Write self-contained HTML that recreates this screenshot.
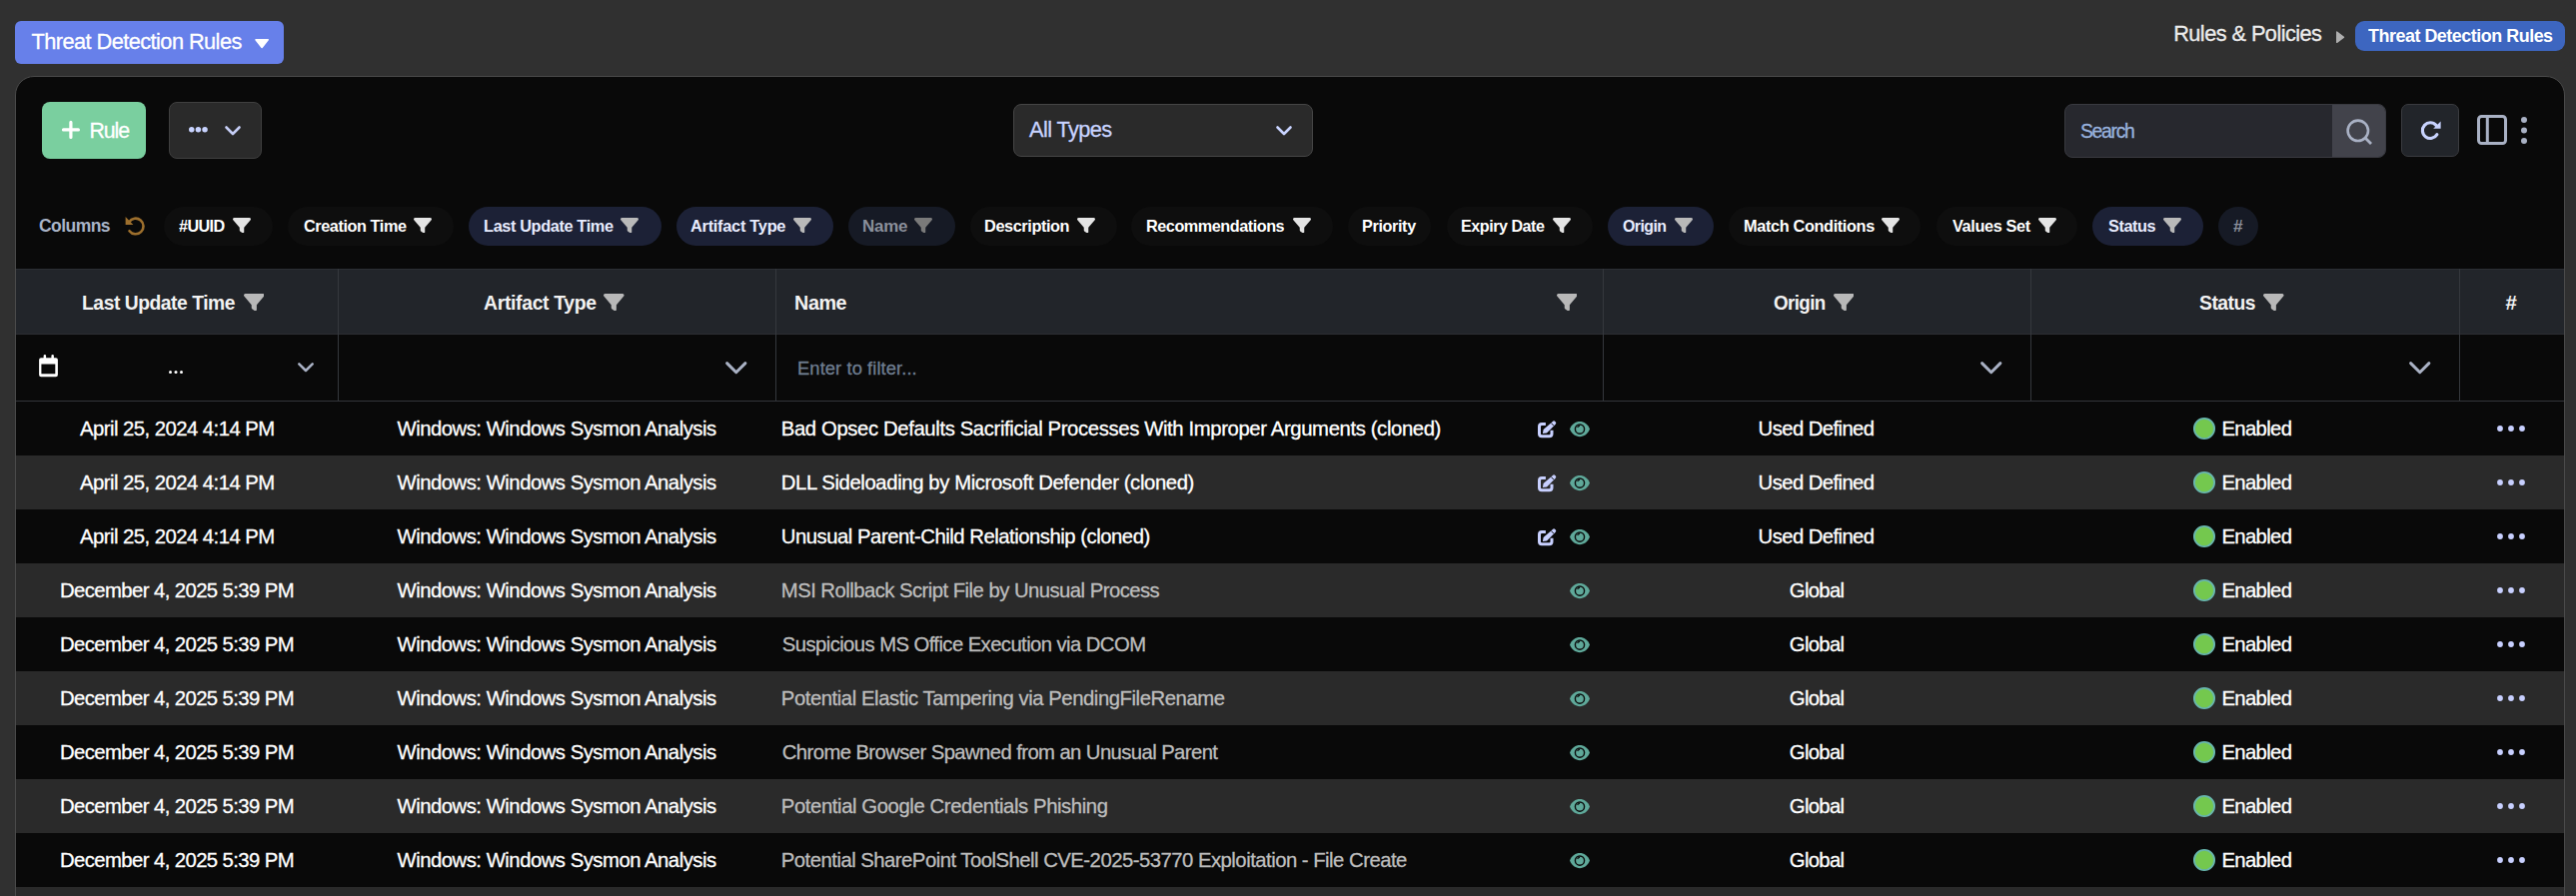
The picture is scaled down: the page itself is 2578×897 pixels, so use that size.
<!DOCTYPE html>
<html><head><meta charset="utf-8"><style>
html,body{margin:0;padding:0;}
body{width:2578px;height:897px;overflow:hidden;background:#303030;position:relative;font-family:'Liberation Sans', sans-serif;}
</style></head><body>
<div style="position:absolute;left:15px;top:21px;width:269px;height:43px;background:#6780ea;border-radius:6px;"></div><svg style="position:absolute;left:254.5px;top:38.8px;overflow:visible" width="14.2" height="9.4" viewBox="0 0 14.2 9.4"><path d="M1 0.8 H13.2 L7.1 8.4 Z" fill="#fff" stroke="#fff" stroke-width="1.6" stroke-linejoin="round"/></svg><svg style="position:absolute;left:2338px;top:31px;overflow:visible" width="8.3" height="12.3" viewBox="0 0 8.3 12.3"><path d="M0.7 0.9 L7.6 6.15 L0.7 11.4 Z" fill="#b0b0b0" stroke="#b0b0b0" stroke-width="1.3" stroke-linejoin="round"/></svg><div style="position:absolute;left:2357px;top:21px;width:210px;height:30px;background:#3d66c0;border-radius:9px;"></div><div style="position:absolute;left:15px;top:76px;width:2552px;height:900px;background:#090909;border:1px solid #4a4a4a;box-sizing:border-box;border-radius:19px 19px 0 0"></div><div style="position:absolute;left:42px;top:102px;width:104px;height:57px;background:#7acf9f;border-radius:8px;"></div><svg style="position:absolute;left:61.8px;top:121.2px;overflow:visible" width="18" height="18" viewBox="0 0 18 18"><path d="M8.9 1.4 V16.4 M1.5 8.9 H16.4" stroke="#fff" stroke-width="3.2" stroke-linecap="round"/></svg><div style="position:absolute;left:169px;top:102px;width:93px;height:57px;background:#2a2a2a;border-radius:8px;border:1px solid #3f3f3f;box-sizing:border-box;"></div><svg style="position:absolute;left:188.8px;top:126.6px;overflow:visible" width="19" height="5.6" viewBox="0 0 19 5.6"><circle cx="2.75" cy="2.8" r="2.75" fill="#c8d3ff"/><circle cx="9.4" cy="2.8" r="2.75" fill="#c8d3ff"/><circle cx="16.05" cy="2.8" r="2.75" fill="#c8d3ff"/></svg><svg style="position:absolute;left:224.5px;top:125.7px;overflow:visible" width="16" height="10" viewBox="0 0 16 10"><path d="M1.5 1.5 L8 8 L14.5 1.5" fill="none" stroke="#c5cdf5" stroke-width="2.6" stroke-linecap="round" stroke-linejoin="round"/></svg><div style="position:absolute;left:1014px;top:104px;width:300px;height:53px;background:#2a2a2a;border-radius:8px;border:1px solid #454545;box-sizing:border-box;"></div><svg style="position:absolute;left:1276.6px;top:126px;overflow:visible" width="16" height="9.5" viewBox="0 0 16 9.5"><path d="M1.5 1.5 L8 8 L14.5 1.5" fill="none" stroke="#c8d3ff" stroke-width="2.6" stroke-linecap="round" stroke-linejoin="round"/></svg><div style="position:absolute;left:2066px;top:104px;width:322px;height:54px;background:#27282e;border-radius:8px;border:1px solid #393a40;box-sizing:border-box;"></div><div style="position:absolute;left:2334px;top:105px;width:53px;height:52px;background:#42434b;border-radius:0 7px 7px 0"></div><svg style="position:absolute;left:2346px;top:117px;overflow:visible" width="30" height="30" viewBox="0 0 30 30"><circle cx="13.8" cy="13.8" r="10.2" fill="none" stroke="#a9b1c4" stroke-width="2.6"/><path d="M21.0 21.0 L27.0 27.0" stroke="#a9b1c4" stroke-width="2.8" stroke-linecap="butt"/></svg><div style="position:absolute;left:2403px;top:104px;width:58px;height:53px;background:#22252a;border-radius:7px;border:1px solid #3a3b3f;box-sizing:border-box;"></div><svg style="position:absolute;left:2422px;top:120px;overflow:visible" width="22" height="22" viewBox="0 0 22 22"><path d="M16.0 5.4 A7.8 7.8 0 1 0 16.9 14.6" fill="none" stroke="#c8d3ff" stroke-width="3.1" stroke-linecap="round"/><path d="M20.6 1.4 V8.7 H13.2 Z" fill="#c8d3ff"/></svg><svg style="position:absolute;left:2479px;top:115px;overflow:visible" width="30" height="30" viewBox="0 0 30 30"><rect x="1.5" y="1.5" width="27" height="27" rx="3" fill="none" stroke="#a9b1c4" stroke-width="3"/><path d="M10.3 1.5 V28.5" stroke="#a9b1c4" stroke-width="3"/></svg><svg style="position:absolute;left:2523px;top:117.4px;overflow:visible" width="6" height="27" viewBox="0 0 6 27"><circle cx="3" cy="3" r="3" fill="#a9b1c4"/><circle cx="3" cy="13.6" r="3" fill="#a9b1c4"/><circle cx="3" cy="24" r="3" fill="#a9b1c4"/></svg><svg style="position:absolute;left:124.9px;top:216.7px;overflow:visible" width="20" height="19" viewBox="0 0 20 19"><path d="M4.2 5.2 A7.8 7.8 0 1 1 4.5 14.2" fill="none" stroke="#9d6f2d" stroke-width="2.6" stroke-linecap="round"/><path d="M0.6 0 V8 H8.4 Z" fill="#9d6f2d"/></svg><div style="position:absolute;left:163.7px;top:207px;width:109.10000000000002px;height:39px;background:#0e0e0e;border-radius:20px;"></div><svg style="position:absolute;left:233px;top:218px" width="18" height="15.3" viewBox="0 32 512 448" preserveAspectRatio="none"><path d="M3.9 54.9C10.5 40.9 24.5 32 40 32H472c15.5 0 29.5 8.9 36.1 22.9s4.6 30.5-5.2 42.5L320 320.9V448c0 12.1-6.8 23.2-17.7 28.6s-23.8 4.3-33.5-3l-64-48c-8.1-6-12.8-15.5-12.8-25.6V320.9L9 97.3C-.7 85.4-2.8 68.8 3.9 54.9z" fill="#e4e4e4"/></svg><div style="position:absolute;left:287.8px;top:207px;width:165.8px;height:39px;background:#0e0e0e;border-radius:20px;"></div><svg style="position:absolute;left:414.4px;top:218px" width="18" height="15.3" viewBox="0 32 512 448" preserveAspectRatio="none"><path d="M3.9 54.9C10.5 40.9 24.5 32 40 32H472c15.5 0 29.5 8.9 36.1 22.9s4.6 30.5-5.2 42.5L320 320.9V448c0 12.1-6.8 23.2-17.7 28.6s-23.8 4.3-33.5-3l-64-48c-8.1-6-12.8-15.5-12.8-25.6V320.9L9 97.3C-.7 85.4-2.8 68.8 3.9 54.9z" fill="#e4e4e4"/></svg><div style="position:absolute;left:469.3px;top:207px;width:192.49999999999994px;height:39px;background:#1c2136;border-radius:20px;"></div><svg style="position:absolute;left:620.5px;top:218px" width="18" height="15.3" viewBox="0 32 512 448" preserveAspectRatio="none"><path d="M3.9 54.9C10.5 40.9 24.5 32 40 32H472c15.5 0 29.5 8.9 36.1 22.9s4.6 30.5-5.2 42.5L320 320.9V448c0 12.1-6.8 23.2-17.7 28.6s-23.8 4.3-33.5-3l-64-48c-8.1-6-12.8-15.5-12.8-25.6V320.9L9 97.3C-.7 85.4-2.8 68.8 3.9 54.9z" fill="#b9b9b9"/></svg><div style="position:absolute;left:677.2px;top:207px;width:156.79999999999995px;height:39px;background:#1c2136;border-radius:20px;"></div><svg style="position:absolute;left:793.7px;top:218px" width="18" height="15.3" viewBox="0 32 512 448" preserveAspectRatio="none"><path d="M3.9 54.9C10.5 40.9 24.5 32 40 32H472c15.5 0 29.5 8.9 36.1 22.9s4.6 30.5-5.2 42.5L320 320.9V448c0 12.1-6.8 23.2-17.7 28.6s-23.8 4.3-33.5-3l-64-48c-8.1-6-12.8-15.5-12.8-25.6V320.9L9 97.3C-.7 85.4-2.8 68.8 3.9 54.9z" fill="#b9b9b9"/></svg><div style="position:absolute;left:848.8px;top:207px;width:107.10000000000002px;height:39px;background:#161a25;border-radius:20px;"></div><svg style="position:absolute;left:915.4px;top:218px" width="18" height="15.3" viewBox="0 32 512 448" preserveAspectRatio="none"><path d="M3.9 54.9C10.5 40.9 24.5 32 40 32H472c15.5 0 29.5 8.9 36.1 22.9s4.6 30.5-5.2 42.5L320 320.9V448c0 12.1-6.8 23.2-17.7 28.6s-23.8 4.3-33.5-3l-64-48c-8.1-6-12.8-15.5-12.8-25.6V320.9L9 97.3C-.7 85.4-2.8 68.8 3.9 54.9z" fill="#7a7a7a"/></svg><div style="position:absolute;left:970.5px;top:207px;width:147.29999999999995px;height:39px;background:#0e0e0e;border-radius:20px;"></div><svg style="position:absolute;left:1077.6px;top:218px" width="18" height="15.3" viewBox="0 32 512 448" preserveAspectRatio="none"><path d="M3.9 54.9C10.5 40.9 24.5 32 40 32H472c15.5 0 29.5 8.9 36.1 22.9s4.6 30.5-5.2 42.5L320 320.9V448c0 12.1-6.8 23.2-17.7 28.6s-23.8 4.3-33.5-3l-64-48c-8.1-6-12.8-15.5-12.8-25.6V320.9L9 97.3C-.7 85.4-2.8 68.8 3.9 54.9z" fill="#e4e4e4"/></svg><div style="position:absolute;left:1132.4px;top:207px;width:201.19999999999982px;height:39px;background:#0e0e0e;border-radius:20px;"></div><svg style="position:absolute;left:1293.8px;top:218px" width="18" height="15.3" viewBox="0 32 512 448" preserveAspectRatio="none"><path d="M3.9 54.9C10.5 40.9 24.5 32 40 32H472c15.5 0 29.5 8.9 36.1 22.9s4.6 30.5-5.2 42.5L320 320.9V448c0 12.1-6.8 23.2-17.7 28.6s-23.8 4.3-33.5-3l-64-48c-8.1-6-12.8-15.5-12.8-25.6V320.9L9 97.3C-.7 85.4-2.8 68.8 3.9 54.9z" fill="#e4e4e4"/></svg><div style="position:absolute;left:1348.9px;top:207px;width:83.29999999999995px;height:39px;background:#0e0e0e;border-radius:20px;"></div><div style="position:absolute;left:1448px;top:207px;width:145.5999999999999px;height:39px;background:#0e0e0e;border-radius:20px;"></div><svg style="position:absolute;left:1553.9px;top:218px" width="18" height="15.3" viewBox="0 32 512 448" preserveAspectRatio="none"><path d="M3.9 54.9C10.5 40.9 24.5 32 40 32H472c15.5 0 29.5 8.9 36.1 22.9s4.6 30.5-5.2 42.5L320 320.9V448c0 12.1-6.8 23.2-17.7 28.6s-23.8 4.3-33.5-3l-64-48c-8.1-6-12.8-15.5-12.8-25.6V320.9L9 97.3C-.7 85.4-2.8 68.8 3.9 54.9z" fill="#e4e4e4"/></svg><div style="position:absolute;left:1609px;top:207px;width:105.79999999999995px;height:39px;background:#1c2136;border-radius:20px;"></div><svg style="position:absolute;left:1675.6px;top:218px" width="18" height="15.3" viewBox="0 32 512 448" preserveAspectRatio="none"><path d="M3.9 54.9C10.5 40.9 24.5 32 40 32H472c15.5 0 29.5 8.9 36.1 22.9s4.6 30.5-5.2 42.5L320 320.9V448c0 12.1-6.8 23.2-17.7 28.6s-23.8 4.3-33.5-3l-64-48c-8.1-6-12.8-15.5-12.8-25.6V320.9L9 97.3C-.7 85.4-2.8 68.8 3.9 54.9z" fill="#b9b9b9"/></svg><div style="position:absolute;left:1729.9px;top:207px;width:192.39999999999986px;height:39px;background:#0e0e0e;border-radius:20px;"></div><svg style="position:absolute;left:1883.3px;top:218px" width="18" height="15.3" viewBox="0 32 512 448" preserveAspectRatio="none"><path d="M3.9 54.9C10.5 40.9 24.5 32 40 32H472c15.5 0 29.5 8.9 36.1 22.9s4.6 30.5-5.2 42.5L320 320.9V448c0 12.1-6.8 23.2-17.7 28.6s-23.8 4.3-33.5-3l-64-48c-8.1-6-12.8-15.5-12.8-25.6V320.9L9 97.3C-.7 85.4-2.8 68.8 3.9 54.9z" fill="#e4e4e4"/></svg><div style="position:absolute;left:1938.4px;top:207px;width:140.5px;height:39px;background:#0e0e0e;border-radius:20px;"></div><svg style="position:absolute;left:2040px;top:218px" width="18" height="15.3" viewBox="0 32 512 448" preserveAspectRatio="none"><path d="M3.9 54.9C10.5 40.9 24.5 32 40 32H472c15.5 0 29.5 8.9 36.1 22.9s4.6 30.5-5.2 42.5L320 320.9V448c0 12.1-6.8 23.2-17.7 28.6s-23.8 4.3-33.5-3l-64-48c-8.1-6-12.8-15.5-12.8-25.6V320.9L9 97.3C-.7 85.4-2.8 68.8 3.9 54.9z" fill="#e4e4e4"/></svg><div style="position:absolute;left:2094.2px;top:207px;width:110.60000000000036px;height:39px;background:#1c2136;border-radius:20px;"></div><svg style="position:absolute;left:2165.2px;top:218px" width="18" height="15.3" viewBox="0 32 512 448" preserveAspectRatio="none"><path d="M3.9 54.9C10.5 40.9 24.5 32 40 32H472c15.5 0 29.5 8.9 36.1 22.9s4.6 30.5-5.2 42.5L320 320.9V448c0 12.1-6.8 23.2-17.7 28.6s-23.8 4.3-33.5-3l-64-48c-8.1-6-12.8-15.5-12.8-25.6V320.9L9 97.3C-.7 85.4-2.8 68.8 3.9 54.9z" fill="#b9b9b9"/></svg><div style="position:absolute;left:2220px;top:207px;width:40px;height:39px;background:#161a25;border-radius:20px;"></div><div style="position:absolute;left:16px;top:269px;width:2550px;height:66px;background:#22252a;border-radius:0;"></div><div style="position:absolute;left:16px;top:269px;width:2550px;height:1px;background:#2c2f34"></div><div style="position:absolute;left:16px;top:334px;width:2550px;height:1px;background:#2c2d32"></div><div style="position:absolute;left:16px;top:401px;width:2550px;height:1px;background:#33353a"></div><div style="position:absolute;left:338px;top:269px;width:1px;height:132px;background:#35383d"></div><div style="position:absolute;left:776px;top:269px;width:1px;height:132px;background:#35383d"></div><div style="position:absolute;left:1604px;top:269px;width:1px;height:132px;background:#35383d"></div><div style="position:absolute;left:2032px;top:269px;width:1px;height:132px;background:#35383d"></div><div style="position:absolute;left:2461px;top:269px;width:1px;height:132px;background:#35383d"></div><svg style="position:absolute;left:243.7px;top:293.8px" width="20.6" height="17.3" viewBox="0 32 512 448" preserveAspectRatio="none"><path d="M3.9 54.9C10.5 40.9 24.5 32 40 32H472c15.5 0 29.5 8.9 36.1 22.9s4.6 30.5-5.2 42.5L320 320.9V448c0 12.1-6.8 23.2-17.7 28.6s-23.8 4.3-33.5-3l-64-48c-8.1-6-12.8-15.5-12.8-25.6V320.9L9 97.3C-.7 85.4-2.8 68.8 3.9 54.9z" fill="#b8b8b8"/></svg><svg style="position:absolute;left:604px;top:293.8px" width="20.6" height="17.3" viewBox="0 32 512 448" preserveAspectRatio="none"><path d="M3.9 54.9C10.5 40.9 24.5 32 40 32H472c15.5 0 29.5 8.9 36.1 22.9s4.6 30.5-5.2 42.5L320 320.9V448c0 12.1-6.8 23.2-17.7 28.6s-23.8 4.3-33.5-3l-64-48c-8.1-6-12.8-15.5-12.8-25.6V320.9L9 97.3C-.7 85.4-2.8 68.8 3.9 54.9z" fill="#b8b8b8"/></svg><svg style="position:absolute;left:1557.7px;top:293.8px" width="20.6" height="17.3" viewBox="0 32 512 448" preserveAspectRatio="none"><path d="M3.9 54.9C10.5 40.9 24.5 32 40 32H472c15.5 0 29.5 8.9 36.1 22.9s4.6 30.5-5.2 42.5L320 320.9V448c0 12.1-6.8 23.2-17.7 28.6s-23.8 4.3-33.5-3l-64-48c-8.1-6-12.8-15.5-12.8-25.6V320.9L9 97.3C-.7 85.4-2.8 68.8 3.9 54.9z" fill="#b8b8b8"/></svg><svg style="position:absolute;left:1834.6px;top:293.8px" width="20.6" height="17.3" viewBox="0 32 512 448" preserveAspectRatio="none"><path d="M3.9 54.9C10.5 40.9 24.5 32 40 32H472c15.5 0 29.5 8.9 36.1 22.9s4.6 30.5-5.2 42.5L320 320.9V448c0 12.1-6.8 23.2-17.7 28.6s-23.8 4.3-33.5-3l-64-48c-8.1-6-12.8-15.5-12.8-25.6V320.9L9 97.3C-.7 85.4-2.8 68.8 3.9 54.9z" fill="#b8b8b8"/></svg><svg style="position:absolute;left:2265.1px;top:293.8px" width="20.6" height="17.3" viewBox="0 32 512 448" preserveAspectRatio="none"><path d="M3.9 54.9C10.5 40.9 24.5 32 40 32H472c15.5 0 29.5 8.9 36.1 22.9s4.6 30.5-5.2 42.5L320 320.9V448c0 12.1-6.8 23.2-17.7 28.6s-23.8 4.3-33.5-3l-64-48c-8.1-6-12.8-15.5-12.8-25.6V320.9L9 97.3C-.7 85.4-2.8 68.8 3.9 54.9z" fill="#b8b8b8"/></svg><svg style="position:absolute;left:38.8px;top:354.7px;overflow:visible" width="19" height="23" viewBox="0 0 19 23"><path fill-rule="evenodd" d="M2.1 3.2 H16.9 Q18.9 3.2 18.9 5.2 V20.3 Q18.9 22.3 16.9 22.3 H2.1 Q0.1 22.3 0.1 20.3 V5.2 Q0.1 3.2 2.1 3.2 Z M2.4 9.4 V19.3 H16.3 V9.4 Z" fill="#fff"/><path d="M5.85 1.3 V4 M13.65 1.3 V4" stroke="#fff" stroke-width="2.5" stroke-linecap="round"/></svg><svg style="position:absolute;left:169.2px;top:371.2px;overflow:visible" width="14" height="3" viewBox="0 0 14 3"><circle cx="1.5" cy="1.5" r="1.5" fill="#fff"/><circle cx="7" cy="1.5" r="1.5" fill="#fff"/><circle cx="12.5" cy="1.5" r="1.5" fill="#fff"/></svg><svg style="position:absolute;left:297.6px;top:362.9px;overflow:visible" width="16" height="9.5" viewBox="0 0 16 9.5"><path d="M1.3 1.3 L8 8 L14.7 1.3" fill="none" stroke="#a9b1c4" stroke-width="2.5" stroke-linecap="round" stroke-linejoin="round"/></svg><svg style="position:absolute;left:726.3px;top:361.7px;overflow:visible" width="21.5" height="12.3" viewBox="0 0 21.5 12.3"><path d="M1.6 1.6 L10.75 10.7 L19.9 1.6" fill="none" stroke="#a9b1c4" stroke-width="3" stroke-linecap="round" stroke-linejoin="round"/></svg><svg style="position:absolute;left:1982.3px;top:361.7px;overflow:visible" width="21.5" height="12.3" viewBox="0 0 21.5 12.3"><path d="M1.6 1.6 L10.75 10.7 L19.9 1.6" fill="none" stroke="#a9b1c4" stroke-width="3" stroke-linecap="round" stroke-linejoin="round"/></svg><svg style="position:absolute;left:2411.3px;top:361.7px;overflow:visible" width="21.5" height="12.3" viewBox="0 0 21.5 12.3"><path d="M1.6 1.6 L10.75 10.7 L19.9 1.6" fill="none" stroke="#a9b1c4" stroke-width="3" stroke-linecap="round" stroke-linejoin="round"/></svg><div style="position:absolute;left:16px;top:402px;width:2550px;height:54px;background:#090909;border-radius:0;"></div><svg style="position:absolute;left:1539px;top:420.8px;overflow:visible" width="19" height="17" viewBox="0 0 19 17"><path d="M7.9 3.55 H4 Q1.5 3.55 1.5 6 V13.3 Q1.5 15.8 4 15.8 H11.5 Q14 15.8 14 13.3 V9.7" fill="none" stroke="#c8d0ff" stroke-width="3" stroke-linecap="butt"/><path d="M14.9 0.9 Q16.1 -0.3 17.3 0.9 L17.7 1.3 Q18.9 2.5 17.7 3.7 L9.0 12.4 L4.9 13.1 L5.6 9.0 Z" fill="#c8d0ff"/><path d="M13.3 2.5 L16.1 5.3" stroke="#090909" stroke-width="1"/></svg><svg style="position:absolute;left:1571px;top:421.9px;overflow:visible" width="20" height="15.2" viewBox="0 0 20 15.2"><path d="M0 7.6 C3.5 -2.5 16.5 -2.5 20 7.6 C16.5 17.7 3.5 17.7 0 7.6 Z" fill="#5fa99a"/><circle cx="10" cy="7.6" r="4.6" fill="none" stroke="#0a0a0a" stroke-width="1.4"/><path d="M7.6 5.8 A3 3 0 0 1 10 4.4" fill="none" stroke="#0a0a0a" stroke-width="1.3"/></svg><svg style="position:absolute;left:2195px;top:417.6px;overflow:visible" width="22" height="22" viewBox="0 0 22 22"><circle cx="11" cy="11" r="10.1" fill="#74c84e" stroke="#68b6ad" stroke-width="1.9"/></svg><svg style="position:absolute;left:2499px;top:426px;overflow:visible" width="28" height="6" viewBox="0 0 28 6"><circle cx="3" cy="3" r="2.9" fill="#c8d0ff"/><circle cx="14" cy="3" r="2.9" fill="#c8d0ff"/><circle cx="25" cy="3" r="2.9" fill="#c8d0ff"/></svg><div style="position:absolute;left:16px;top:456px;width:2550px;height:54px;background:#2a2a2a;border-radius:0;"></div><svg style="position:absolute;left:1539px;top:474.8px;overflow:visible" width="19" height="17" viewBox="0 0 19 17"><path d="M7.9 3.55 H4 Q1.5 3.55 1.5 6 V13.3 Q1.5 15.8 4 15.8 H11.5 Q14 15.8 14 13.3 V9.7" fill="none" stroke="#c8d0ff" stroke-width="3" stroke-linecap="butt"/><path d="M14.9 0.9 Q16.1 -0.3 17.3 0.9 L17.7 1.3 Q18.9 2.5 17.7 3.7 L9.0 12.4 L4.9 13.1 L5.6 9.0 Z" fill="#c8d0ff"/><path d="M13.3 2.5 L16.1 5.3" stroke="#090909" stroke-width="1"/></svg><svg style="position:absolute;left:1571px;top:475.9px;overflow:visible" width="20" height="15.2" viewBox="0 0 20 15.2"><path d="M0 7.6 C3.5 -2.5 16.5 -2.5 20 7.6 C16.5 17.7 3.5 17.7 0 7.6 Z" fill="#5fa99a"/><circle cx="10" cy="7.6" r="4.6" fill="none" stroke="#0a0a0a" stroke-width="1.4"/><path d="M7.6 5.8 A3 3 0 0 1 10 4.4" fill="none" stroke="#0a0a0a" stroke-width="1.3"/></svg><svg style="position:absolute;left:2195px;top:471.6px;overflow:visible" width="22" height="22" viewBox="0 0 22 22"><circle cx="11" cy="11" r="10.1" fill="#74c84e" stroke="#68b6ad" stroke-width="1.9"/></svg><svg style="position:absolute;left:2499px;top:480px;overflow:visible" width="28" height="6" viewBox="0 0 28 6"><circle cx="3" cy="3" r="2.9" fill="#c8d0ff"/><circle cx="14" cy="3" r="2.9" fill="#c8d0ff"/><circle cx="25" cy="3" r="2.9" fill="#c8d0ff"/></svg><div style="position:absolute;left:16px;top:510px;width:2550px;height:54px;background:#090909;border-radius:0;"></div><svg style="position:absolute;left:1539px;top:528.8px;overflow:visible" width="19" height="17" viewBox="0 0 19 17"><path d="M7.9 3.55 H4 Q1.5 3.55 1.5 6 V13.3 Q1.5 15.8 4 15.8 H11.5 Q14 15.8 14 13.3 V9.7" fill="none" stroke="#c8d0ff" stroke-width="3" stroke-linecap="butt"/><path d="M14.9 0.9 Q16.1 -0.3 17.3 0.9 L17.7 1.3 Q18.9 2.5 17.7 3.7 L9.0 12.4 L4.9 13.1 L5.6 9.0 Z" fill="#c8d0ff"/><path d="M13.3 2.5 L16.1 5.3" stroke="#090909" stroke-width="1"/></svg><svg style="position:absolute;left:1571px;top:529.9px;overflow:visible" width="20" height="15.2" viewBox="0 0 20 15.2"><path d="M0 7.6 C3.5 -2.5 16.5 -2.5 20 7.6 C16.5 17.7 3.5 17.7 0 7.6 Z" fill="#5fa99a"/><circle cx="10" cy="7.6" r="4.6" fill="none" stroke="#0a0a0a" stroke-width="1.4"/><path d="M7.6 5.8 A3 3 0 0 1 10 4.4" fill="none" stroke="#0a0a0a" stroke-width="1.3"/></svg><svg style="position:absolute;left:2195px;top:525.6px;overflow:visible" width="22" height="22" viewBox="0 0 22 22"><circle cx="11" cy="11" r="10.1" fill="#74c84e" stroke="#68b6ad" stroke-width="1.9"/></svg><svg style="position:absolute;left:2499px;top:534px;overflow:visible" width="28" height="6" viewBox="0 0 28 6"><circle cx="3" cy="3" r="2.9" fill="#c8d0ff"/><circle cx="14" cy="3" r="2.9" fill="#c8d0ff"/><circle cx="25" cy="3" r="2.9" fill="#c8d0ff"/></svg><div style="position:absolute;left:16px;top:564px;width:2550px;height:54px;background:#2a2a2a;border-radius:0;"></div><svg style="position:absolute;left:1571px;top:583.9px;overflow:visible" width="20" height="15.2" viewBox="0 0 20 15.2"><path d="M0 7.6 C3.5 -2.5 16.5 -2.5 20 7.6 C16.5 17.7 3.5 17.7 0 7.6 Z" fill="#5fa99a"/><circle cx="10" cy="7.6" r="4.6" fill="none" stroke="#0a0a0a" stroke-width="1.4"/><path d="M7.6 5.8 A3 3 0 0 1 10 4.4" fill="none" stroke="#0a0a0a" stroke-width="1.3"/></svg><svg style="position:absolute;left:2195px;top:579.6px;overflow:visible" width="22" height="22" viewBox="0 0 22 22"><circle cx="11" cy="11" r="10.1" fill="#74c84e" stroke="#68b6ad" stroke-width="1.9"/></svg><svg style="position:absolute;left:2499px;top:588px;overflow:visible" width="28" height="6" viewBox="0 0 28 6"><circle cx="3" cy="3" r="2.9" fill="#c8d0ff"/><circle cx="14" cy="3" r="2.9" fill="#c8d0ff"/><circle cx="25" cy="3" r="2.9" fill="#c8d0ff"/></svg><div style="position:absolute;left:16px;top:618px;width:2550px;height:54px;background:#090909;border-radius:0;"></div><svg style="position:absolute;left:1571px;top:637.9px;overflow:visible" width="20" height="15.2" viewBox="0 0 20 15.2"><path d="M0 7.6 C3.5 -2.5 16.5 -2.5 20 7.6 C16.5 17.7 3.5 17.7 0 7.6 Z" fill="#5fa99a"/><circle cx="10" cy="7.6" r="4.6" fill="none" stroke="#0a0a0a" stroke-width="1.4"/><path d="M7.6 5.8 A3 3 0 0 1 10 4.4" fill="none" stroke="#0a0a0a" stroke-width="1.3"/></svg><svg style="position:absolute;left:2195px;top:633.6px;overflow:visible" width="22" height="22" viewBox="0 0 22 22"><circle cx="11" cy="11" r="10.1" fill="#74c84e" stroke="#68b6ad" stroke-width="1.9"/></svg><svg style="position:absolute;left:2499px;top:642px;overflow:visible" width="28" height="6" viewBox="0 0 28 6"><circle cx="3" cy="3" r="2.9" fill="#c8d0ff"/><circle cx="14" cy="3" r="2.9" fill="#c8d0ff"/><circle cx="25" cy="3" r="2.9" fill="#c8d0ff"/></svg><div style="position:absolute;left:16px;top:672px;width:2550px;height:54px;background:#2a2a2a;border-radius:0;"></div><svg style="position:absolute;left:1571px;top:691.9px;overflow:visible" width="20" height="15.2" viewBox="0 0 20 15.2"><path d="M0 7.6 C3.5 -2.5 16.5 -2.5 20 7.6 C16.5 17.7 3.5 17.7 0 7.6 Z" fill="#5fa99a"/><circle cx="10" cy="7.6" r="4.6" fill="none" stroke="#0a0a0a" stroke-width="1.4"/><path d="M7.6 5.8 A3 3 0 0 1 10 4.4" fill="none" stroke="#0a0a0a" stroke-width="1.3"/></svg><svg style="position:absolute;left:2195px;top:687.6px;overflow:visible" width="22" height="22" viewBox="0 0 22 22"><circle cx="11" cy="11" r="10.1" fill="#74c84e" stroke="#68b6ad" stroke-width="1.9"/></svg><svg style="position:absolute;left:2499px;top:696px;overflow:visible" width="28" height="6" viewBox="0 0 28 6"><circle cx="3" cy="3" r="2.9" fill="#c8d0ff"/><circle cx="14" cy="3" r="2.9" fill="#c8d0ff"/><circle cx="25" cy="3" r="2.9" fill="#c8d0ff"/></svg><div style="position:absolute;left:16px;top:726px;width:2550px;height:54px;background:#090909;border-radius:0;"></div><svg style="position:absolute;left:1571px;top:745.9px;overflow:visible" width="20" height="15.2" viewBox="0 0 20 15.2"><path d="M0 7.6 C3.5 -2.5 16.5 -2.5 20 7.6 C16.5 17.7 3.5 17.7 0 7.6 Z" fill="#5fa99a"/><circle cx="10" cy="7.6" r="4.6" fill="none" stroke="#0a0a0a" stroke-width="1.4"/><path d="M7.6 5.8 A3 3 0 0 1 10 4.4" fill="none" stroke="#0a0a0a" stroke-width="1.3"/></svg><svg style="position:absolute;left:2195px;top:741.6px;overflow:visible" width="22" height="22" viewBox="0 0 22 22"><circle cx="11" cy="11" r="10.1" fill="#74c84e" stroke="#68b6ad" stroke-width="1.9"/></svg><svg style="position:absolute;left:2499px;top:750px;overflow:visible" width="28" height="6" viewBox="0 0 28 6"><circle cx="3" cy="3" r="2.9" fill="#c8d0ff"/><circle cx="14" cy="3" r="2.9" fill="#c8d0ff"/><circle cx="25" cy="3" r="2.9" fill="#c8d0ff"/></svg><div style="position:absolute;left:16px;top:780px;width:2550px;height:54px;background:#2a2a2a;border-radius:0;"></div><svg style="position:absolute;left:1571px;top:799.9px;overflow:visible" width="20" height="15.2" viewBox="0 0 20 15.2"><path d="M0 7.6 C3.5 -2.5 16.5 -2.5 20 7.6 C16.5 17.7 3.5 17.7 0 7.6 Z" fill="#5fa99a"/><circle cx="10" cy="7.6" r="4.6" fill="none" stroke="#0a0a0a" stroke-width="1.4"/><path d="M7.6 5.8 A3 3 0 0 1 10 4.4" fill="none" stroke="#0a0a0a" stroke-width="1.3"/></svg><svg style="position:absolute;left:2195px;top:795.6px;overflow:visible" width="22" height="22" viewBox="0 0 22 22"><circle cx="11" cy="11" r="10.1" fill="#74c84e" stroke="#68b6ad" stroke-width="1.9"/></svg><svg style="position:absolute;left:2499px;top:804px;overflow:visible" width="28" height="6" viewBox="0 0 28 6"><circle cx="3" cy="3" r="2.9" fill="#c8d0ff"/><circle cx="14" cy="3" r="2.9" fill="#c8d0ff"/><circle cx="25" cy="3" r="2.9" fill="#c8d0ff"/></svg><div style="position:absolute;left:16px;top:834px;width:2550px;height:54px;background:#090909;border-radius:0;"></div><svg style="position:absolute;left:1571px;top:853.9px;overflow:visible" width="20" height="15.2" viewBox="0 0 20 15.2"><path d="M0 7.6 C3.5 -2.5 16.5 -2.5 20 7.6 C16.5 17.7 3.5 17.7 0 7.6 Z" fill="#5fa99a"/><circle cx="10" cy="7.6" r="4.6" fill="none" stroke="#0a0a0a" stroke-width="1.4"/><path d="M7.6 5.8 A3 3 0 0 1 10 4.4" fill="none" stroke="#0a0a0a" stroke-width="1.3"/></svg><svg style="position:absolute;left:2195px;top:849.6px;overflow:visible" width="22" height="22" viewBox="0 0 22 22"><circle cx="11" cy="11" r="10.1" fill="#74c84e" stroke="#68b6ad" stroke-width="1.9"/></svg><svg style="position:absolute;left:2499px;top:858px;overflow:visible" width="28" height="6" viewBox="0 0 28 6"><circle cx="3" cy="3" r="2.9" fill="#c8d0ff"/><circle cx="14" cy="3" r="2.9" fill="#c8d0ff"/><circle cx="25" cy="3" r="2.9" fill="#c8d0ff"/></svg><div style="position:absolute;left:16px;top:888px;width:2550px;height:9px;background:#2a2a2a;border-radius:0;"></div>
<div style="position:absolute;left:31.60px;top:31.13px;font-size:21.74px;line-height:1;letter-spacing:-0.552px;font-weight:400;color:#ffffff;-webkit-text-stroke:0.3px #ffffff;white-space:nowrap">Threat Detection Rules</div><div style="position:absolute;left:2175.20px;top:22.83px;font-size:21.74px;line-height:1;letter-spacing:-0.553px;font-weight:400;color:#ececec;-webkit-text-stroke:0.3px #ececec;white-space:nowrap">Rules &amp; Policies</div><div style="position:absolute;left:2370.00px;top:26.00px;font-size:19.28px;line-height:1;letter-spacing:-0.506px;font-weight:700;color:#ffffff;transform:scaleX(0.9291);transform-origin:0px 0;white-space:nowrap">Threat Detection Rules</div><div style="position:absolute;left:89.40px;top:121.01px;font-size:21.30px;line-height:1;letter-spacing:-1.067px;font-weight:400;color:#ffffff;-webkit-text-stroke:0.3px #ffffff;white-space:nowrap">Rule</div><div style="position:absolute;left:1030.00px;top:119.23px;font-size:21.74px;line-height:1;letter-spacing:-0.588px;font-weight:400;color:#c8d3ff;-webkit-text-stroke:0.3px #c8d3ff;white-space:nowrap">All Types</div><div style="position:absolute;left:2082.00px;top:122.01px;font-size:19.42px;line-height:1;letter-spacing:-1.340px;font-weight:400;color:#98b2de;-webkit-text-stroke:0.3px #98b2de;white-space:nowrap">Search</div><div style="position:absolute;left:38.60px;top:216.90px;font-size:18.70px;line-height:1;letter-spacing:-0.598px;font-weight:700;color:#a9b4c7;transform:scaleX(0.9370);transform-origin:0px 0;white-space:nowrap">Columns</div><div style="position:absolute;left:179.30px;top:217.80px;font-size:17.39px;line-height:1;letter-spacing:-0.633px;font-weight:700;color:#ffffff;transform:scaleX(0.9319);transform-origin:0px 0;white-space:nowrap">#UUID</div><div style="position:absolute;left:303.50px;top:217.80px;font-size:17.39px;line-height:1;letter-spacing:-0.449px;font-weight:700;color:#ffffff;transform:scaleX(0.9348);transform-origin:0px 0;white-space:nowrap">Creation Time</div><div style="position:absolute;left:483.50px;top:217.80px;font-size:17.39px;line-height:1;letter-spacing:-0.412px;font-weight:700;color:#e8ecff;transform:scaleX(0.9392);transform-origin:1px 0;white-space:nowrap">Last Update Time</div><div style="position:absolute;left:691.20px;top:217.80px;font-size:17.39px;line-height:1;letter-spacing:-0.331px;font-weight:700;color:#e8ecff;transform:scaleX(0.9463);transform-origin:0px 0;white-space:nowrap">Artifact Type</div><div style="position:absolute;left:863.20px;top:217.80px;font-size:17.39px;line-height:1;letter-spacing:-0.260px;font-weight:700;color:#8a8f9b;transform:scaleX(0.9752);transform-origin:1px 0;white-space:nowrap">Name</div><div style="position:absolute;left:984.90px;top:217.80px;font-size:17.39px;line-height:1;letter-spacing:-0.427px;font-weight:700;color:#ffffff;transform:scaleX(0.9362);transform-origin:1px 0;white-space:nowrap">Description</div><div style="position:absolute;left:1146.80px;top:217.80px;font-size:17.39px;line-height:1;letter-spacing:-0.514px;font-weight:700;color:#ffffff;transform:scaleX(0.9345);transform-origin:1px 0;white-space:nowrap">Recommendations</div><div style="position:absolute;left:1363.30px;top:217.80px;font-size:17.39px;line-height:1;letter-spacing:-0.410px;font-weight:700;color:#ffffff;transform:scaleX(0.9330);transform-origin:1px 0;white-space:nowrap">Priority</div><div style="position:absolute;left:1462.00px;top:217.80px;font-size:17.39px;line-height:1;letter-spacing:-0.510px;font-weight:700;color:#ffffff;transform:scaleX(0.9255);transform-origin:1px 0;white-space:nowrap">Expiry Date</div><div style="position:absolute;left:1623.60px;top:217.80px;font-size:17.39px;line-height:1;letter-spacing:-0.629px;font-weight:700;color:#e8ecff;transform:scaleX(0.9153);transform-origin:0px 0;white-space:nowrap">Origin</div><div style="position:absolute;left:1744.50px;top:217.80px;font-size:17.39px;line-height:1;letter-spacing:-0.411px;font-weight:700;color:#ffffff;transform:scaleX(0.9400);transform-origin:1px 0;white-space:nowrap">Match Conditions</div><div style="position:absolute;left:1953.70px;top:217.80px;font-size:17.39px;line-height:1;letter-spacing:-0.416px;font-weight:700;color:#ffffff;transform:scaleX(0.9393);transform-origin:0px 0;white-space:nowrap">Values Set</div><div style="position:absolute;left:2109.50px;top:217.80px;font-size:17.39px;line-height:1;letter-spacing:-0.469px;font-weight:700;color:#e8ecff;transform:scaleX(0.9377);transform-origin:0px 0;white-space:nowrap">Status</div><div style="position:absolute;left:2235.00px;top:217.80px;font-size:17.39px;line-height:1;letter-spacing:1.500px;font-weight:700;color:#8a8f9b;white-space:nowrap">#</div><div style="position:absolute;left:82.30px;top:292.80px;font-size:20.43px;line-height:1;letter-spacing:-0.464px;font-weight:700;color:#f2f2f2;transform:scaleX(0.9418);transform-origin:1px 0;white-space:nowrap">Last Update Time</div><div style="position:absolute;left:483.50px;top:292.80px;font-size:20.43px;line-height:1;letter-spacing:-0.358px;font-weight:700;color:#f2f2f2;transform:scaleX(0.9502);transform-origin:0px 0;white-space:nowrap">Artifact Type</div><div style="position:absolute;left:795.00px;top:292.80px;font-size:20.43px;line-height:1;letter-spacing:-0.414px;font-weight:700;color:#f2f2f2;transform:scaleX(0.9667);transform-origin:1px 0;white-space:nowrap">Name</div><div style="position:absolute;left:1774.60px;top:292.80px;font-size:20.43px;line-height:1;letter-spacing:-0.686px;font-weight:700;color:#f2f2f2;transform:scaleX(0.9210);transform-origin:0px 0;white-space:nowrap">Origin</div><div style="position:absolute;left:2200.60px;top:292.80px;font-size:20.43px;line-height:1;letter-spacing:-0.492px;font-weight:700;color:#f2f2f2;transform:scaleX(0.9439);transform-origin:0px 0;white-space:nowrap">Status</div><div style="position:absolute;left:2507.40px;top:292.80px;font-size:20.43px;line-height:1;letter-spacing:1.000px;font-weight:700;color:#f2f2f2;white-space:nowrap">#</div><div style="position:absolute;left:798.00px;top:359.71px;font-size:18.41px;line-height:1;letter-spacing:0.059px;font-weight:400;color:#6e7d90;-webkit-text-stroke:0.3px #6e7d90;white-space:nowrap">Enter to filter...</div><div style="position:absolute;left:80.10px;top:419.01px;font-size:20.29px;line-height:1;letter-spacing:-0.538px;font-weight:400;color:#ffffff;-webkit-text-stroke:0.3px #ffffff;white-space:nowrap">April 25, 2024 4:14 PM</div><div style="position:absolute;left:397.50px;top:419.01px;font-size:20.29px;line-height:1;letter-spacing:-0.487px;font-weight:400;color:#ffffff;-webkit-text-stroke:0.3px #ffffff;white-space:nowrap">Windows: Windows Sysmon Analysis</div><div style="position:absolute;left:781.80px;top:419.01px;font-size:20.29px;line-height:1;letter-spacing:-0.375px;font-weight:400;color:#ffffff;-webkit-text-stroke:0.3px #ffffff;white-space:nowrap">Bad Opsec Defaults Sacrificial Processes With Improper Arguments (cloned)</div><div style="position:absolute;left:1759.60px;top:419.01px;font-size:20.29px;line-height:1;letter-spacing:-0.582px;font-weight:400;color:#ffffff;-webkit-text-stroke:0.3px #ffffff;white-space:nowrap">Used Defined</div><div style="position:absolute;left:2223.40px;top:419.01px;font-size:20.29px;line-height:1;letter-spacing:-0.650px;font-weight:400;color:#ffffff;-webkit-text-stroke:0.3px #ffffff;white-space:nowrap">Enabled</div><div style="position:absolute;left:80.10px;top:473.01px;font-size:20.29px;line-height:1;letter-spacing:-0.538px;font-weight:400;color:#ffffff;-webkit-text-stroke:0.3px #ffffff;white-space:nowrap">April 25, 2024 4:14 PM</div><div style="position:absolute;left:397.50px;top:473.01px;font-size:20.29px;line-height:1;letter-spacing:-0.487px;font-weight:400;color:#ffffff;-webkit-text-stroke:0.3px #ffffff;white-space:nowrap">Windows: Windows Sysmon Analysis</div><div style="position:absolute;left:781.80px;top:473.01px;font-size:20.29px;line-height:1;letter-spacing:-0.389px;font-weight:400;color:#ffffff;-webkit-text-stroke:0.3px #ffffff;white-space:nowrap">DLL Sideloading by Microsoft Defender (cloned)</div><div style="position:absolute;left:1759.60px;top:473.01px;font-size:20.29px;line-height:1;letter-spacing:-0.582px;font-weight:400;color:#ffffff;-webkit-text-stroke:0.3px #ffffff;white-space:nowrap">Used Defined</div><div style="position:absolute;left:2223.40px;top:473.01px;font-size:20.29px;line-height:1;letter-spacing:-0.650px;font-weight:400;color:#ffffff;-webkit-text-stroke:0.3px #ffffff;white-space:nowrap">Enabled</div><div style="position:absolute;left:80.10px;top:527.01px;font-size:20.29px;line-height:1;letter-spacing:-0.538px;font-weight:400;color:#ffffff;-webkit-text-stroke:0.3px #ffffff;white-space:nowrap">April 25, 2024 4:14 PM</div><div style="position:absolute;left:397.50px;top:527.01px;font-size:20.29px;line-height:1;letter-spacing:-0.487px;font-weight:400;color:#ffffff;-webkit-text-stroke:0.3px #ffffff;white-space:nowrap">Windows: Windows Sysmon Analysis</div><div style="position:absolute;left:781.80px;top:527.01px;font-size:20.29px;line-height:1;letter-spacing:-0.476px;font-weight:400;color:#ffffff;-webkit-text-stroke:0.3px #ffffff;white-space:nowrap">Unusual Parent-Child Relationship (cloned)</div><div style="position:absolute;left:1759.60px;top:527.01px;font-size:20.29px;line-height:1;letter-spacing:-0.582px;font-weight:400;color:#ffffff;-webkit-text-stroke:0.3px #ffffff;white-space:nowrap">Used Defined</div><div style="position:absolute;left:2223.40px;top:527.01px;font-size:20.29px;line-height:1;letter-spacing:-0.650px;font-weight:400;color:#ffffff;-webkit-text-stroke:0.3px #ffffff;white-space:nowrap">Enabled</div><div style="position:absolute;left:60.00px;top:581.01px;font-size:20.29px;line-height:1;letter-spacing:-0.583px;font-weight:400;color:#ffffff;-webkit-text-stroke:0.3px #ffffff;white-space:nowrap">December 4, 2025 5:39 PM</div><div style="position:absolute;left:397.50px;top:581.01px;font-size:20.29px;line-height:1;letter-spacing:-0.487px;font-weight:400;color:#ffffff;-webkit-text-stroke:0.3px #ffffff;white-space:nowrap">Windows: Windows Sysmon Analysis</div><div style="position:absolute;left:781.80px;top:581.01px;font-size:20.29px;line-height:1;letter-spacing:-0.531px;font-weight:400;color:#bdbdbd;-webkit-text-stroke:0.3px #bdbdbd;white-space:nowrap">MSI Rollback Script File by Unusual Process</div><div style="position:absolute;left:1790.80px;top:581.01px;font-size:20.29px;line-height:1;letter-spacing:-0.680px;font-weight:400;color:#ffffff;-webkit-text-stroke:0.3px #ffffff;white-space:nowrap">Global</div><div style="position:absolute;left:2223.40px;top:581.01px;font-size:20.29px;line-height:1;letter-spacing:-0.650px;font-weight:400;color:#ffffff;-webkit-text-stroke:0.3px #ffffff;white-space:nowrap">Enabled</div><div style="position:absolute;left:60.00px;top:635.01px;font-size:20.29px;line-height:1;letter-spacing:-0.583px;font-weight:400;color:#ffffff;-webkit-text-stroke:0.3px #ffffff;white-space:nowrap">December 4, 2025 5:39 PM</div><div style="position:absolute;left:397.50px;top:635.01px;font-size:20.29px;line-height:1;letter-spacing:-0.487px;font-weight:400;color:#ffffff;-webkit-text-stroke:0.3px #ffffff;white-space:nowrap">Windows: Windows Sysmon Analysis</div><div style="position:absolute;left:782.80px;top:635.01px;font-size:20.29px;line-height:1;letter-spacing:-0.579px;font-weight:400;color:#bdbdbd;-webkit-text-stroke:0.3px #bdbdbd;white-space:nowrap">Suspicious MS Office Execution via DCOM</div><div style="position:absolute;left:1790.80px;top:635.01px;font-size:20.29px;line-height:1;letter-spacing:-0.680px;font-weight:400;color:#ffffff;-webkit-text-stroke:0.3px #ffffff;white-space:nowrap">Global</div><div style="position:absolute;left:2223.40px;top:635.01px;font-size:20.29px;line-height:1;letter-spacing:-0.650px;font-weight:400;color:#ffffff;-webkit-text-stroke:0.3px #ffffff;white-space:nowrap">Enabled</div><div style="position:absolute;left:60.00px;top:689.01px;font-size:20.29px;line-height:1;letter-spacing:-0.583px;font-weight:400;color:#ffffff;-webkit-text-stroke:0.3px #ffffff;white-space:nowrap">December 4, 2025 5:39 PM</div><div style="position:absolute;left:397.50px;top:689.01px;font-size:20.29px;line-height:1;letter-spacing:-0.487px;font-weight:400;color:#ffffff;-webkit-text-stroke:0.3px #ffffff;white-space:nowrap">Windows: Windows Sysmon Analysis</div><div style="position:absolute;left:781.80px;top:689.01px;font-size:20.29px;line-height:1;letter-spacing:-0.438px;font-weight:400;color:#bdbdbd;-webkit-text-stroke:0.3px #bdbdbd;white-space:nowrap">Potential Elastic Tampering via PendingFileRename</div><div style="position:absolute;left:1790.80px;top:689.01px;font-size:20.29px;line-height:1;letter-spacing:-0.680px;font-weight:400;color:#ffffff;-webkit-text-stroke:0.3px #ffffff;white-space:nowrap">Global</div><div style="position:absolute;left:2223.40px;top:689.01px;font-size:20.29px;line-height:1;letter-spacing:-0.650px;font-weight:400;color:#ffffff;-webkit-text-stroke:0.3px #ffffff;white-space:nowrap">Enabled</div><div style="position:absolute;left:60.00px;top:743.01px;font-size:20.29px;line-height:1;letter-spacing:-0.583px;font-weight:400;color:#ffffff;-webkit-text-stroke:0.3px #ffffff;white-space:nowrap">December 4, 2025 5:39 PM</div><div style="position:absolute;left:397.50px;top:743.01px;font-size:20.29px;line-height:1;letter-spacing:-0.487px;font-weight:400;color:#ffffff;-webkit-text-stroke:0.3px #ffffff;white-space:nowrap">Windows: Windows Sysmon Analysis</div><div style="position:absolute;left:782.80px;top:743.01px;font-size:20.29px;line-height:1;letter-spacing:-0.591px;font-weight:400;color:#bdbdbd;-webkit-text-stroke:0.3px #bdbdbd;white-space:nowrap">Chrome Browser Spawned from an Unusual Parent</div><div style="position:absolute;left:1790.80px;top:743.01px;font-size:20.29px;line-height:1;letter-spacing:-0.680px;font-weight:400;color:#ffffff;-webkit-text-stroke:0.3px #ffffff;white-space:nowrap">Global</div><div style="position:absolute;left:2223.40px;top:743.01px;font-size:20.29px;line-height:1;letter-spacing:-0.650px;font-weight:400;color:#ffffff;-webkit-text-stroke:0.3px #ffffff;white-space:nowrap">Enabled</div><div style="position:absolute;left:60.00px;top:797.01px;font-size:20.29px;line-height:1;letter-spacing:-0.583px;font-weight:400;color:#ffffff;-webkit-text-stroke:0.3px #ffffff;white-space:nowrap">December 4, 2025 5:39 PM</div><div style="position:absolute;left:397.50px;top:797.01px;font-size:20.29px;line-height:1;letter-spacing:-0.487px;font-weight:400;color:#ffffff;-webkit-text-stroke:0.3px #ffffff;white-space:nowrap">Windows: Windows Sysmon Analysis</div><div style="position:absolute;left:781.80px;top:797.01px;font-size:20.29px;line-height:1;letter-spacing:-0.400px;font-weight:400;color:#bdbdbd;-webkit-text-stroke:0.3px #bdbdbd;white-space:nowrap">Potential Google Credentials Phishing</div><div style="position:absolute;left:1790.80px;top:797.01px;font-size:20.29px;line-height:1;letter-spacing:-0.680px;font-weight:400;color:#ffffff;-webkit-text-stroke:0.3px #ffffff;white-space:nowrap">Global</div><div style="position:absolute;left:2223.40px;top:797.01px;font-size:20.29px;line-height:1;letter-spacing:-0.650px;font-weight:400;color:#ffffff;-webkit-text-stroke:0.3px #ffffff;white-space:nowrap">Enabled</div><div style="position:absolute;left:60.00px;top:851.01px;font-size:20.29px;line-height:1;letter-spacing:-0.583px;font-weight:400;color:#ffffff;-webkit-text-stroke:0.3px #ffffff;white-space:nowrap">December 4, 2025 5:39 PM</div><div style="position:absolute;left:397.50px;top:851.01px;font-size:20.29px;line-height:1;letter-spacing:-0.487px;font-weight:400;color:#ffffff;-webkit-text-stroke:0.3px #ffffff;white-space:nowrap">Windows: Windows Sysmon Analysis</div><div style="position:absolute;left:781.80px;top:851.01px;font-size:20.29px;line-height:1;letter-spacing:-0.507px;font-weight:400;color:#bdbdbd;-webkit-text-stroke:0.3px #bdbdbd;white-space:nowrap">Potential SharePoint ToolShell CVE-2025-53770 Exploitation - File Create</div><div style="position:absolute;left:1790.80px;top:851.01px;font-size:20.29px;line-height:1;letter-spacing:-0.680px;font-weight:400;color:#ffffff;-webkit-text-stroke:0.3px #ffffff;white-space:nowrap">Global</div><div style="position:absolute;left:2223.40px;top:851.01px;font-size:20.29px;line-height:1;letter-spacing:-0.650px;font-weight:400;color:#ffffff;-webkit-text-stroke:0.3px #ffffff;white-space:nowrap">Enabled</div>
</body></html>
